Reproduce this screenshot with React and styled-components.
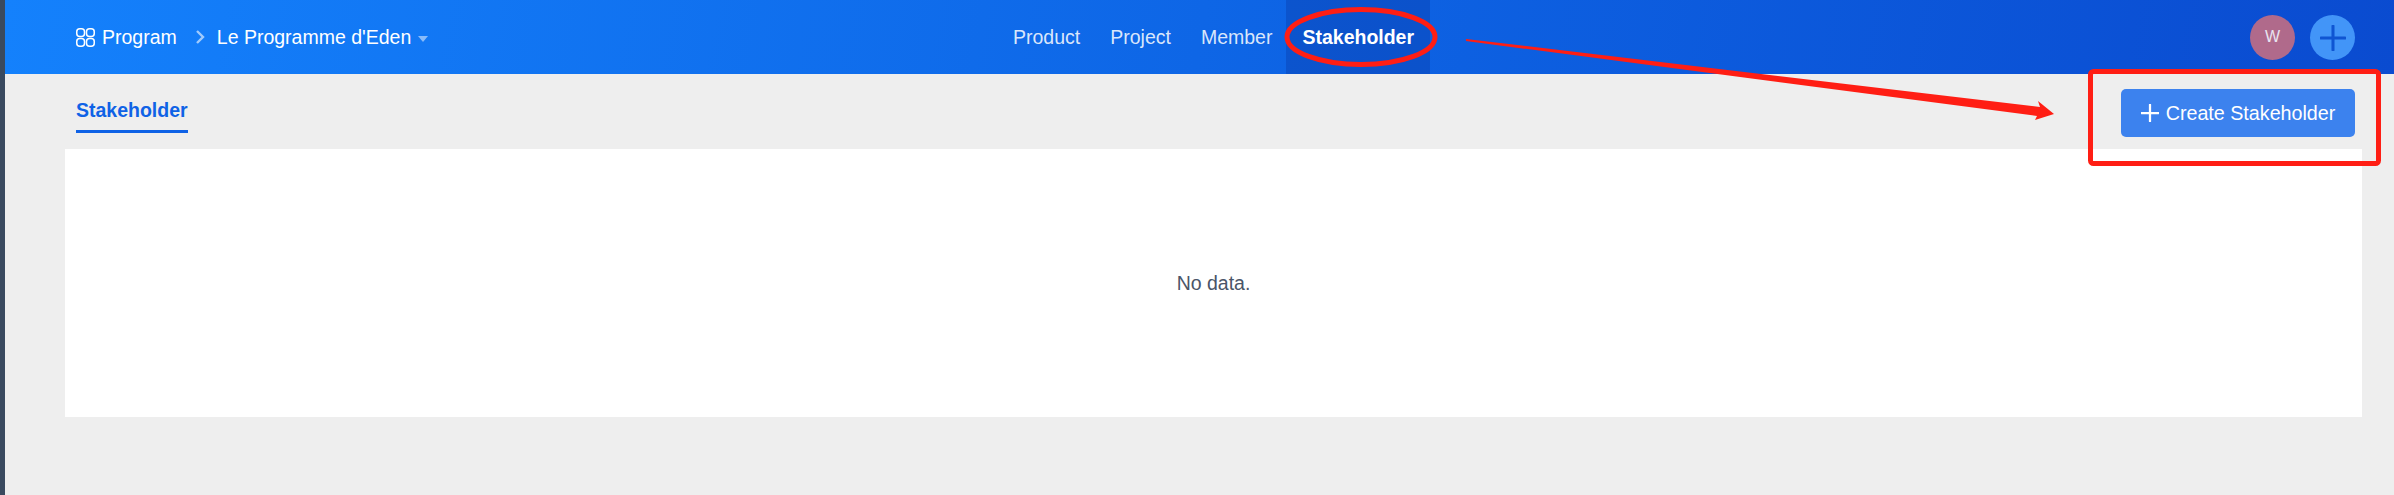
import React from 'react';
import styled, { createGlobalStyle } from 'styled-components';

const GlobalStyle = createGlobalStyle`
  html, body {
    margin: 0;
    padding: 0;
    height: 100%;
    overflow: hidden;
  }
  body {
    font-family: "Liberation Sans", Arial, sans-serif;
  }
`;

const Shell = styled.div`
  position: relative;
  display: flex;
  width: 2394px;
  height: 495px;
  background-color: #eeeeee;
`;

const Rail = styled.div`
  flex: 0 0 5px;
  background-color: #3a4a5f;
`;

const Page = styled.div`
  flex: 1;
  display: flex;
  flex-direction: column;
`;

const Header = styled.header`
  display: flex;
  align-items: center;
  height: 74px;
  padding-left: 71px;
  padding-right: 39px;
  background: linear-gradient(100deg, #1481fc 0%, #0e66e6 50%, #0a4bd0 100%);
  color: #fff;
`;

const Breadcrumb = styled.div`
  flex: 0 0 922px;
  display: flex;
  align-items: center;
  font-size: 19.5px;
`;

const CrumbLabel = styled.span`
  margin-left: 7px;
`;

const CrumbArrow = styled.svg`
  width: 10px;
  height: 14px;
  margin: 0 12px 0 18px;
`;

const Caret = styled.span`
  width: 0;
  height: 0;
  margin-left: 7px;
  margin-top: 3px;
  border-left: 5px solid transparent;
  border-right: 5px solid transparent;
  border-top: 6px solid rgba(255, 255, 255, 0.5);
`;

const Nav = styled.nav`
  display: flex;
  align-self: stretch;
`;

const NavItem = styled.a`
  display: flex;
  align-items: center;
  padding: 0 ${props => (props.$active ? '16px' : '15px')};
  margin-left: ${props => (props.$active ? '-1px' : '0')};
  font-size: 19.5px;
  font-weight: ${props => (props.$active ? 700 : 400)};
  color: ${props => (props.$active ? '#fff' : 'rgba(255, 255, 255, 0.85)')};
  background-color: ${props => (props.$active ? 'rgba(10, 60, 170, 0.4)' : 'transparent')};
`;

const Actions = styled.div`
  margin-left: auto;
  display: flex;
  align-items: center;
  gap: 15px;
`;

const Avatar = styled.div`
  display: flex;
  align-items: center;
  justify-content: center;
  width: 45px;
  height: 45px;
  border-radius: 50%;
  background-color: #b06a8b;
  color: #e8e4f0;
  font-size: 16px;
`;

const AddCircle = styled.div`
  display: flex;
  align-items: center;
  justify-content: center;
  width: 45px;
  height: 45px;
  margin-top: 1px;
  border-radius: 50%;
  background-color: #4295f8;
`;

const TabRow = styled.div`
  display: flex;
  justify-content: space-between;
  height: 75px;
  padding: 0 39px 0 71px;
`;

const Tab = styled.div`
  align-self: flex-start;
  margin-top: 25px;
  padding-bottom: 9px;
  border-bottom: 3px solid #0f62e6;
  color: #0f62e6;
  font-size: 19.5px;
  line-height: 22px;
  font-weight: 700;
`;

const CreateButton = styled.button`
  display: flex;
  align-items: center;
  justify-content: center;
  gap: 7px;
  align-self: flex-start;
  width: 234px;
  height: 48px;
  margin-top: 15px;
  padding: 0;
  border: none;
  border-radius: 5px;
  background-color: #3c82ee;
  color: #fff;
  font-family: inherit;
  font-size: 19.7px;
`;

const Card = styled.section`
  display: flex;
  align-items: center;
  justify-content: center;
  height: 268px;
  margin: 0 32px 0 60px;
  background-color: #fff;
  color: #4a5568;
  font-size: 19.5px;
`;

const Annotation = styled.svg`
  position: absolute;
  top: 0;
  left: 0;
  pointer-events: none;
`;

const ProgramIcon = () => (
  <svg width="19" height="19" viewBox="0 0 19 19" fill="none" stroke="#fff" strokeWidth="1.5">
    <rect x="0.75" y="0.75" width="7.75" height="7.75" rx="3" />
    <rect x="10.5" y="0.75" width="7.75" height="7.75" rx="3" />
    <rect x="0.75" y="10.5" width="7.75" height="7.75" rx="3" />
    <rect x="10.5" y="10.5" width="7.75" height="7.75" rx="3" />
  </svg>
);

const PlusIcon = ({ size, color, weight }) => (
  <svg width={size} height={size} viewBox="0 0 24 24" fill="none" stroke={color} strokeWidth={weight} strokeLinecap="round">
    <path d="M12 1v22M1 12h22" />
  </svg>
);

const navItems = ['Product', 'Project', 'Member', 'Stakeholder'];

const App = () => (
  <Shell>
    <GlobalStyle />
    <Rail />
    <Page>
      <Header>
        <Breadcrumb>
          <ProgramIcon />
          <CrumbLabel>Program</CrumbLabel>
          <CrumbArrow viewBox="0 0 10 14" fill="none" stroke="rgba(255,255,255,0.6)" strokeWidth="2.4">
            <path d="M2 1l6 6-6 6" />
          </CrumbArrow>
          <span>Le Programme d'Eden</span>
          <Caret />
        </Breadcrumb>
        <Nav>
          {navItems.map((item) => (
            <NavItem key={item} $active={item === 'Stakeholder'}>{item}</NavItem>
          ))}
        </Nav>
        <Actions>
          <Avatar>W</Avatar>
          <AddCircle>
            <PlusIcon size={26} color="#0f55d2" weight={2.8} />
          </AddCircle>
        </Actions>
      </Header>
      <TabRow>
        <Tab>Stakeholder</Tab>
        <CreateButton>
          <PlusIcon size={18} color="#fff" weight={3} />
          Create Stakeholder
        </CreateButton>
      </TabRow>
      <Card>No data.</Card>
    </Page>
    {/* red markup drawn on top of the screenshot */}
    <Annotation width="2394" height="495" fill="none">
      <ellipse cx="1361" cy="37" rx="74" ry="27.5" stroke="#ff1e14" strokeWidth="5" />
      <rect x="2090.5" y="71.5" width="288" height="92" rx="3" stroke="#ff1e14" strokeWidth="5" />
      <polygon
        points="1466,39 2040,107 2038,101 2054,114 2035,120 2037,116 1466,41"
        fill="#ff1e14"
      />
    </Annotation>
  </Shell>
);

export default App;
